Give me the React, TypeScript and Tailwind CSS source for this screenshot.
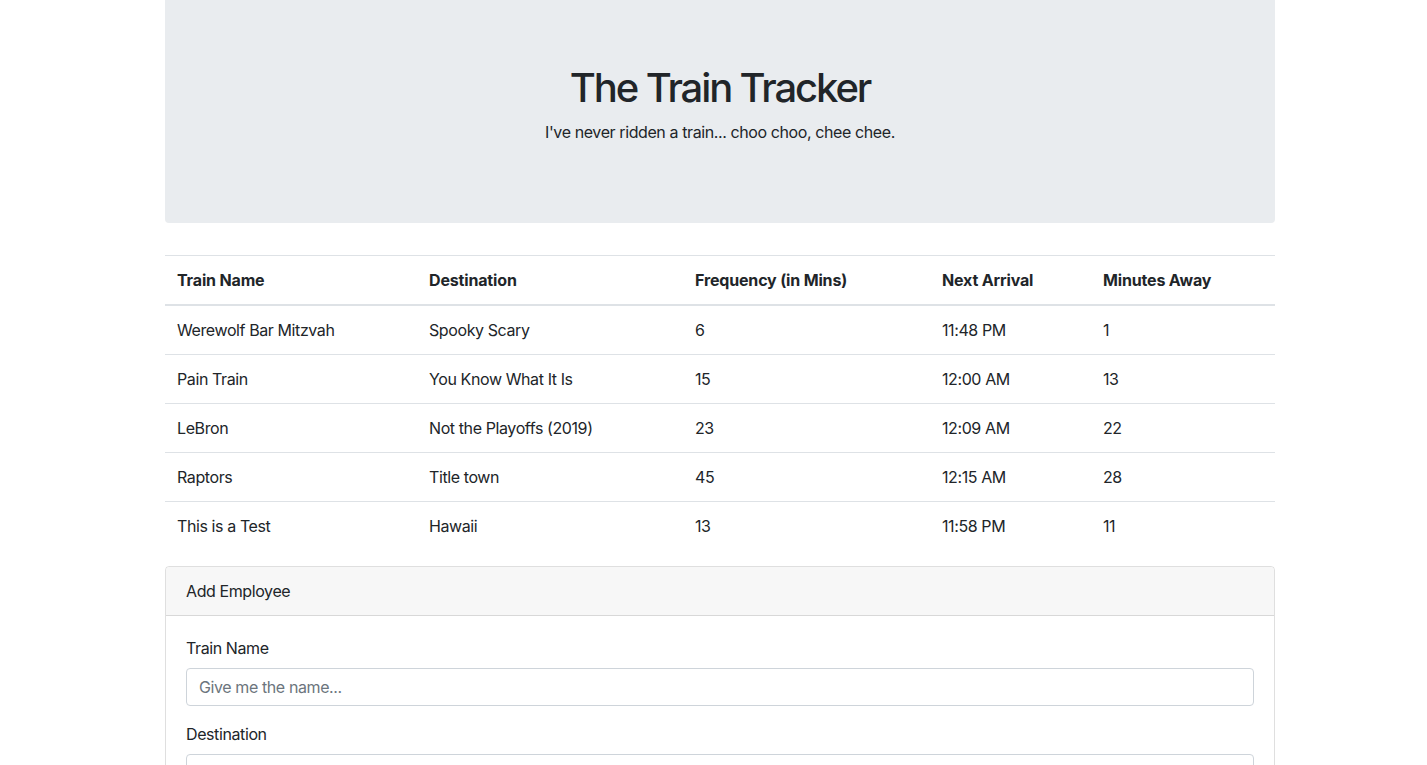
import React from 'react';

const trains = [
  { name: 'Werewolf Bar Mitzvah', dest: 'Spooky Scary', freq: '6', next: '11:48 PM', away: '1' },
  { name: 'Pain Train', dest: 'You Know What It Is', freq: '15', next: '12:00 AM', away: '13' },
  { name: 'LeBron', dest: 'Not the Playoffs (2019)', freq: '23', next: '12:09 AM', away: '22' },
  { name: 'Raptors', dest: 'Title town', freq: '45', next: '12:15 AM', away: '28' },
  { name: 'This is a Test', dest: 'Hawaii', freq: '13', next: '11:58 PM', away: '11' },
];

const App: React.FC = () => {
  return (
    <div className="min-h-screen bg-white text-[#212529] text-base tracking-[-0.025em] font-['Inter','Liberation_Sans',sans-serif]">
      <div className="pl-[165px]">
        <div className="w-[1110px]">
          {/* Jumbotron */}
          <div className="bg-[#e9ecef] rounded-b-[4px] pt-[64px] pb-[63px] text-center mb-8">
            <h1 className="text-[40px] leading-[48px] font-medium tracking-[-0.053em] mb-2">The Train Tracker</h1>
            <p className="leading-6 mb-4">I've never ridden a train... choo choo, chee chee.</p>
          </div>

          {/* Train table */}
          <table className="w-full border-collapse mb-4 text-left">
            <thead>
              <tr className="border-t border-[#dee2e6]">
                <th className="w-[252px] p-3 font-bold leading-6 tracking-[-0.01em] border-b-2 border-[#dee2e6]">Train Name</th>
                <th className="w-[266px] p-3 font-bold leading-6 tracking-[-0.01em] border-b-2 border-[#dee2e6]">Destination</th>
                <th className="w-[247px] p-3 font-bold leading-6 tracking-[-0.01em] border-b-2 border-[#dee2e6]">Frequency (in Mins)</th>
                <th className="w-[161px] p-3 font-bold leading-6 tracking-[-0.01em] border-b-2 border-[#dee2e6]">Next Arrival</th>
                <th className="p-3 font-bold leading-6 tracking-[-0.01em] border-b-2 border-[#dee2e6]">Minutes Away</th>
              </tr>
            </thead>
            <tbody>
              {trains.map((t, i) => (
                <tr key={t.name} className={i > 0 ? 'border-t border-[#dee2e6]' : ''}>
                  <td className="p-3 leading-6">{t.name}</td>
                  <td className="p-3 leading-6">{t.dest}</td>
                  <td className="p-3 leading-6">{t.freq}</td>
                  <td className="p-3 leading-6">{t.next}</td>
                  <td className="p-3 leading-6">{t.away}</td>
                </tr>
              ))}
            </tbody>
          </table>

          {/* Add form card */}
          <div className="border border-black/[0.125] rounded-[4px]">
            <div className="bg-[#f7f7f7] px-5 py-3 leading-6 border-b border-black/[0.125] rounded-t-[4px]">
              Add Employee
            </div>
            <div className="p-5">
              <div className="mb-4">
                <label className="block leading-6 mb-2">Train Name</label>
                <input
                  className="block w-full h-[38px] px-3 py-1.5 border border-[#ced4da] rounded-[4px] tracking-[-0.025em] placeholder:text-[#6c757d] outline-none"
                  placeholder="Give me the name..."
                />
              </div>
              <div className="mb-4">
                <label className="block leading-6 mb-2">Destination</label>
                <input
                  className="block w-full h-[38px] px-3 py-1.5 border border-[#ced4da] rounded-[4px] tracking-[-0.025em] placeholder:text-[#6c757d] outline-none"
                  placeholder="Where to?"
                />
              </div>
            </div>
          </div>
        </div>
      </div>
    </div>
  );
};

export default App;
